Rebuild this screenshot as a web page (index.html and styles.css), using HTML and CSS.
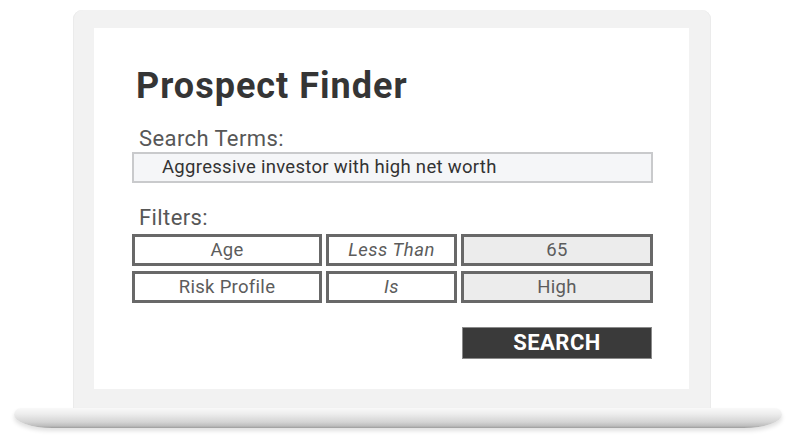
FILE: index.html
```html
<!DOCTYPE html>
<html lang="en">
<head>
<meta charset="utf-8">
<title>Prospect Finder</title>
<link rel="stylesheet" href="styles.css">
</head>
<body>
<div class="stage">
  <div class="lid">
    <div class="screen">
      <div class="form">
        <h1 class="title">Prospect Finder</h1>
        <div class="label">Search Terms:</div>
        <div class="input">Aggressive investor with high net worth</div>
        <div class="label label-filters">Filters:</div>
        <div class="filters">
          <div class="cell">Age</div>
          <div class="cell op">Less Than</div>
          <div class="cell val">65</div>
          <div class="cell">Risk Profile</div>
          <div class="cell op">Is</div>
          <div class="cell val">High</div>
        </div>
        <div class="actions">
          <div class="search-btn">SEARCH</div>
        </div>
      </div>
    </div>
  </div>
  <div class="base"></div>
</div>
</body>
</html>
```

FILE: styles.css
```css
* { box-sizing: border-box; }
html, body {
  margin: 0;
  padding: 0;
  background: #ffffff;
  font-family: Roboto, "Liberation Sans", Arial, sans-serif;
}
.stage {
  width: 796px;
  height: 436px;
  padding-top: 10px;
  display: flex;
  flex-direction: column;
  align-items: flex-start;
}
.lid {
  margin-left: 73px;
  width: 638px;
  height: 398px;
  padding: 18px 22px 19px 21px;
  background: #f2f2f2;
  border-radius: 9px 9px 0 0;
  display: flex;
  box-shadow: inset -1px 0 0 #ebebeb, inset 1px 0 0 #ebebeb;
}
.screen {
  flex: 1;
  background: #ffffff;
  padding: 38px 36px 0 38px;
}
.form {
  display: flex;
  flex-direction: column;
}
.title {
  margin: 0 0 21px 4px;
  font-size: 36px;
  line-height: 40px;
  letter-spacing: 1px;
  font-weight: 700;
  color: #353535;
}
.label {
  margin: 0 0 1px 7px;
  font-size: 22px;
  line-height: 24px;
  letter-spacing: 0.4px;
  color: #575757;
}
.label-filters {
  margin-top: 23px;
  margin-bottom: 4px;
}
.input {
  height: 31px;
  border: 2px solid #c9cacc;
  background: #f5f6f8;
  padding-left: 28px;
  font-size: 18.5px;
  line-height: 27px;
  letter-spacing: 0.3px;
  color: #333;
}
.filters {
  display: grid;
  grid-template-columns: 190px 131px 1fr;
  gap: 5px 4px;
}
.cell {
  height: 32px;
  border: 3px solid #686868;
  background: #ffffff;
  text-align: center;
  font-size: 18.5px;
  line-height: 26px;
  letter-spacing: 0.3px;
  color: #5c5c5c;
}
.cell.op { font-style: italic; letter-spacing: 0.5px; }
.cell.val { background: #ececec; }
.actions {
  display: flex;
  justify-content: flex-end;
  margin-top: 24px;
  padding-right: 1px;
}
.search-btn {
  width: 190px;
  height: 32px;
  background: #3a3a3a;
  border: 1px solid #8a8a8a;
  color: #ffffff;
  font-weight: 700;
  font-size: 22px;
  line-height: 30px;
  letter-spacing: 0.5px;
  text-align: center;
}
.base {
  margin-left: 14px;
  width: 768px;
  height: 20px;
  border-radius: 7px 7px 40px 40px / 7px 7px 14px 14px;
  background: linear-gradient(#f9f9f9 0%, #ededed 30%, #d4d4d4 70%, #bdbdbd 90%, #9c9c9c 100%);
  box-shadow: 0 3px 4px rgba(0, 0, 0, 0.12);
}
```
